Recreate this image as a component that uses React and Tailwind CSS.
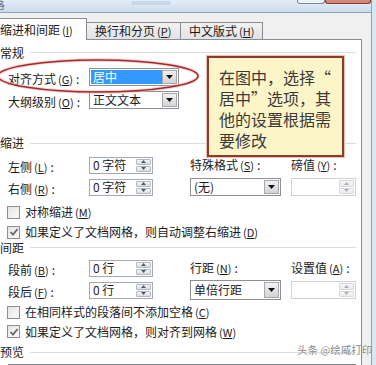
import React from 'react';

const font = { fontFamily: '"Noto Sans CJK SC", "Noto Sans", sans-serif' };

const Key = ({ k }) => (
  <span className="ml-[2px] text-[11px]">
    (<span className="underline">{k}</span>)
  </span>
);

const Label = ({ text, k, colon = true }) => (
  <span className="whitespace-nowrap text-[12px] leading-none text-[#1b1b1b]">
    {text}
    <Key k={k} />
    {colon && <span className="ml-[3px]">:</span>}
  </span>
);

const Heading = ({ text, h }) => (
  <div className={`flex items-center pr-[5px] ${h}`}>
    <span className="whitespace-nowrap text-[12px] leading-none text-[#1b1b1b]">{text}</span>
    <div className="ml-[6px] h-px flex-1 bg-[#d9dde2]" />
  </div>
);

const Arrow = ({ up, color = '#4a5a78' }) => (
  <svg width="5" height="3" viewBox="0 0 5 3">
    <path d={up ? 'M0 3 L2.5 0 L5 3 Z' : 'M0 0 L5 0 L2.5 3 Z'} fill={color} />
  </svg>
);

const Spin = ({ value, disabled, w = 'w-[64px]', h = 'h-[17px]' }) => (
  <div
    className={`flex ${h} ${w} items-center border bg-white ${
      disabled ? 'border-[#cfd2d6]' : 'border-[#a3a9b3]'
    }`}
  >
    <span className="flex-1 pl-[3px] text-[12px] leading-none text-[#1b1b1b]">{value}</span>
    <div className="flex h-full w-[16px] flex-col gap-px py-px pr-px">
      {[true, false].map((up) => (
        <div
          key={String(up)}
          className={`flex flex-1 items-center justify-center rounded-[1px] border bg-gradient-to-b ${
            disabled
              ? 'border-[#d6d8db] from-[#f7f7f7] to-[#ececec]'
              : 'border-[#b4b9c0] from-[#f6f6f6] to-[#dcdcdc]'
          }`}
        >
          <Arrow up={up} color={disabled ? '#a9b0bb' : '#4a5a78'} />
        </div>
      ))}
    </div>
  </div>
);

const Select = ({ value, w, h = 'h-[18px]', highlighted }) => (
  <div className={`flex ${h} ${w} items-center border border-[#8d9096] bg-white p-px`}>
    <div
      className={`flex h-full flex-1 items-center pl-[2px] text-[12px] leading-none ${
        highlighted ? 'bg-[#3399ff] text-white' : 'text-[#1b1b1b]'
      }`}
    >
      {value}
    </div>
    <div className="flex h-full w-[15px] items-center justify-center border border-[#a5a8ad] bg-gradient-to-b from-[#f2f2f2] to-[#d3d3d3]">
      <svg width="7" height="4" viewBox="0 0 7 4">
        <path d="M0 0 L7 0 L3.5 4 Z" fill="#111" />
      </svg>
    </div>
  </div>
);

const Check = ({ checked, children, h }) => (
  <div className={`flex items-center pl-[7px] ${h}`}>
    <div className="flex h-[13px] w-[13px] items-center justify-center border border-[#8f8f8f] bg-gradient-to-br from-[#e4e4e4] to-[#fbfbfb]">
      {checked && (
        <svg width="10" height="10" viewBox="0 0 10 10">
          <path d="M1.5 5 L4 7.6 L8.6 2" fill="none" stroke="#6b6b6b" strokeWidth="1.8" />
        </svg>
      )}
    </div>
    <span className="ml-[5px] whitespace-nowrap text-[12px] leading-none text-[#1b1b1b]">{children}</span>
  </div>
);

const Tab = ({ text, k, active, w }) => (
  <div
    className={`flex shrink-0 items-center border-r border-t border-[#898c95] text-[12px] leading-none text-[#1b1b1b] ${w} ${
      active
        ? 'relative z-10 -mb-px h-[22px] bg-white'
        : 'h-[17px] bg-gradient-to-b from-[#f3f3f3] to-[#e2e2e2] pl-[8px]'
    }`}
  >
    <span className="whitespace-nowrap">
      {text}
      <Key k={k} />
    </span>
  </div>
);

export default function App() {
  return (
    <div className="relative h-[365px] w-[376px] overflow-hidden bg-[#d9e6f3]" style={font}>
      {/* title bar */}
      <div className="flex h-[13px] w-[372px] items-start border-b border-r border-[#8fa2b8] bg-gradient-to-b from-[#e4edf7] to-[#cbdcee]">
        <span className="-ml-[7px] -mt-[5px] text-[12px] text-[#3a4656] opacity-70">落</span>
        <div className="mx-auto mt-[1px] h-[4px] w-[40px] rounded-full bg-[#b9cde2] opacity-60" />
        <div className="h-[4px] w-[28px] rounded-b-[3px] border border-t-0 border-[#7b8797] bg-[#eef3f8]" />
        <div className="h-[4px] w-[46px] rounded-b-[3px] border border-t-0 border-[#8a3a32] bg-[#d4867a]" />
      </div>

      {/* dialog body */}
      <div className="h-[352px] w-[372px] border-r border-[#8fa2b8] bg-[#f0f0f0]">
        {/* tabs */}
        <div className="flex h-[26px] items-end">
          <Tab text="缩进和间距" k="I" active w="w-[87px]" />
          <Tab text="换行和分页" k="P" w="w-[94px]" />
          <Tab text="中文版式" k="H" w="w-[82px]" />
        </div>

        {/* panel */}
        <div className="h-[400px] w-[362px] border-r border-t border-[#898c95] bg-white">
          <Heading text="常规" h="h-[25px]" />
          <div className="flex h-[24px] items-center pl-[8px]">
            <div className="w-[81px]">
              <Label text="对齐方式" k="G" />
            </div>
            <Select value="居中" w="w-[90px]" highlighted />
          </div>
          <div className="flex h-[22px] items-center pl-[8px]">
            <div className="w-[81px]">
              <Label text="大纲级别" k="O" />
            </div>
            <Select value="正文文本" w="w-[90px]" />
          </div>
          <div className="h-[21px]" />

          <Heading text="缩进" h="h-[22px]" />
          <div className="flex pl-[8px]">
            <div className="flex w-[145px] flex-col">
              <div className="flex h-[22px] items-center">
                <div className="w-[81px]">
                  <Label text="左侧" k="L" />
                </div>
                <Spin value="0 字符" />
              </div>
              <div className="flex h-[22px] items-center">
                <div className="w-[81px]">
                  <Label text="右侧" k="R" />
                </div>
                <Spin value="0 字符" />
              </div>
            </div>
            <div className="ml-[37px] flex w-[91px] flex-col">
              <div className="flex h-[22px] items-center">
                <Label text="特殊格式" k="S" />
              </div>
              <div className="flex h-[22px] items-center">
                <Select value="(无)" w="w-[91px]" />
              </div>
            </div>
            <div className="ml-[10px] flex w-[65px] flex-col">
              <div className="flex h-[22px] items-center">
                <Label text="磅值" k="Y" />
              </div>
              <div className="flex h-[22px] items-center">
                <Spin value="" disabled w="w-[65px]" h="h-[18px]" />
              </div>
            </div>
          </div>
          <Check h="h-[28px]">
            对称缩进
            <Key k="M" />
          </Check>
          <Check checked h="h-[12px]">
            如果定义了文档网格，则自动调整右缩进
            <Key k="D" />
          </Check>

          <Heading text="间距" h="h-[19px]" />
          <div className="flex pl-[8px]">
            <div className="flex w-[145px] flex-col">
              <div className="flex h-[22px] items-center">
                <div className="w-[81px]">
                  <Label text="段前" k="B" />
                </div>
                <Spin value="0 行" />
              </div>
              <div className="flex h-[22px] items-center">
                <div className="w-[81px]">
                  <Label text="段后" k="F" />
                </div>
                <Spin value="0 行" />
              </div>
            </div>
            <div className="ml-[37px] flex w-[91px] flex-col">
              <div className="flex h-[22px] items-center">
                <Label text="行距" k="N" />
              </div>
              <div className="flex h-[22px] items-center">
                <Select value="单倍行距" w="w-[91px]" h="h-[20px]" />
              </div>
            </div>
            <div className="ml-[10px] flex w-[65px] flex-col">
              <div className="flex h-[22px] items-center">
                <Label text="设置值" k="A" />
              </div>
              <div className="flex h-[22px] items-center">
                <Spin value="" disabled w="w-[65px]" h="h-[18px]" />
              </div>
            </div>
          </div>
          <Check h="h-[22px]">
            在相同样式的段落间不添加空格
            <Key k="C" />
          </Check>
          <Check checked h="h-[17px]">
            如果定义了文档网格，则对齐到网格
            <Key k="W" />
          </Check>
          <Heading text="预览" h="h-[24px]" />
          <div className="ml-[8px] h-[40px] w-[348px] border-l border-t border-[#828790]" />
        </div>
      </div>

      {/* red marker oval */}
      <svg
        className="pointer-events-none absolute left-0 top-0"
        width="376"
        height="365"
        viewBox="0 0 376 365"
      >
        <ellipse cx="98" cy="76" rx="100" ry="16" fill="none" stroke="#e9b3b0" strokeWidth="3.5" opacity="0.6" />
        <ellipse cx="98" cy="76" rx="100" ry="16" fill="none" stroke="#a52a2a" strokeWidth="1.6" />
      </svg>

      {/* callout note */}
      <div
        className="absolute left-[207px] top-[56px] h-[101px] w-[137px] border-2 border-[#8c3a2c] bg-[#fcf5c8] pl-[10px] pt-[9px] text-[16px] leading-[21px] text-[#3a3a3a] shadow-[0_0_0_1px_#ebbdb3]"
        style={font}
      >
        在图中，选择“
        <br />
        居中”选项，其
        <br />
        他的设置根据需
        <br />
        要修改
      </div>

      {/* watermark */}
      <div className="absolute left-[297px] top-[345px] whitespace-nowrap text-[10.5px] leading-none text-[#8c8c8c]">
        头条 @绘威打印
      </div>
    </div>
  );
}
